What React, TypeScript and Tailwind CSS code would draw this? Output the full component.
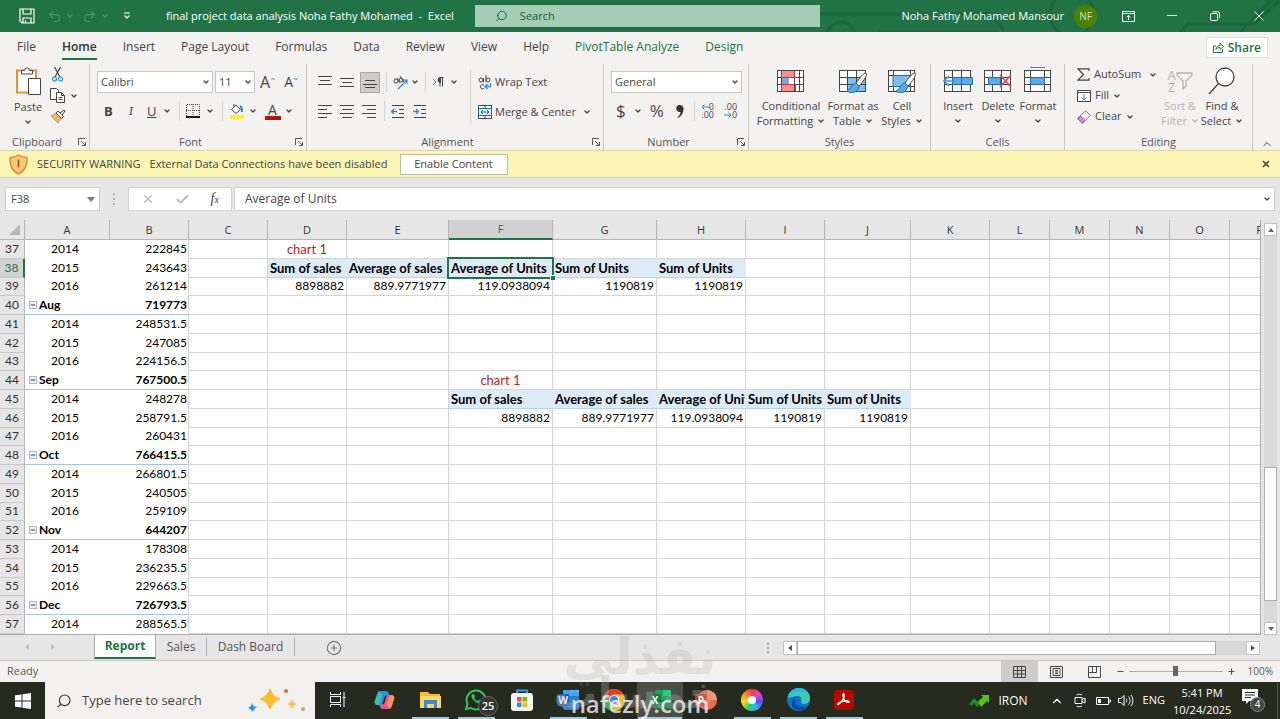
import type { ReactNode } from 'react';
import { ChevronDown, ChevronUp, Minus, Plus, X, Check, Search, Undo2, Redo2, CirclePlus } from 'lucide-react';

type Cell = { text: string; kind?: 'num' | 'head' | 'red' };

const columns = [
    { name: 'A', width: 'w-[85px]' },
    { name: 'B', width: 'w-[79px]' },
    { name: 'C', width: 'w-[79px]' },
    { name: 'D', width: 'w-[79px]' },
    { name: 'E', width: 'w-[102px]' },
    { name: 'F', width: 'w-[104px]' },
    { name: 'G', width: 'w-[104px]' },
    { name: 'H', width: 'w-[89px]' },
    { name: 'I', width: 'w-[79px]' },
    { name: 'J', width: 'w-[86px]' },
    { name: 'K', width: 'w-[79px]' },
    { name: 'L', width: 'w-[60px]' },
    { name: 'M', width: 'w-[60px]' },
    { name: 'N', width: 'w-[60px]' },
    { name: 'O', width: 'w-[60px]' },
    { name: 'P', width: 'w-[60px]' },
];

const pivot: [string, string][] = [
    ['2014', '222845'],
    ['2015', '243643'],
    ['2016', '261214'],
    ['Aug', '719773'],
    ['2014', '248531.5'],
    ['2015', '247085'],
    ['2016', '224156.5'],
    ['Sep', '767500.5'],
    ['2014', '248278'],
    ['2015', '258791.5'],
    ['2016', '260431'],
    ['Oct', '766415.5'],
    ['2014', '266801.5'],
    ['2015', '240505'],
    ['2016', '259109'],
    ['Nov', '644207'],
    ['2014', '178308'],
    ['2015', '236235.5'],
    ['2016', '229663.5'],
    ['Dec', '726793.5'],
    ['2014', '288565.5'],
];

const cells: Record<string, Cell> = {
    D37: { text: 'chart 1', kind: 'red' },
    D38: { text: 'Sum of sales', kind: 'head' },
    E38: { text: 'Average of sales', kind: 'head' },
    F38: { text: 'Average of Units', kind: 'head' },
    G38: { text: 'Sum of Units', kind: 'head' },
    H38: { text: 'Sum of Units', kind: 'head' },
    D39: { text: '8898882', kind: 'num' },
    E39: { text: '889.9771977', kind: 'num' },
    F39: { text: '119.0938094', kind: 'num' },
    G39: { text: '1190819', kind: 'num' },
    H39: { text: '1190819', kind: 'num' },
    F44: { text: 'chart 1', kind: 'red' },
    F45: { text: 'Sum of sales', kind: 'head' },
    G45: { text: 'Average of sales', kind: 'head' },
    H45: { text: 'Average of Units', kind: 'head' },
    I45: { text: 'Sum of Units', kind: 'head' },
    J45: { text: 'Sum of Units', kind: 'head' },
    F46: { text: '8898882', kind: 'num' },
    G46: { text: '889.9771977', kind: 'num' },
    H46: { text: '119.0938094', kind: 'num' },
    I46: { text: '1190819', kind: 'num' },
    J46: { text: '1190819', kind: 'num' },
};

const cellStyles = {
    num: 'text-right border-[#d4d4d4]',
    head: 'font-bold text-[13px] bg-[#ddebf7] border-b-[#b4d3ec] border-r-[#ddebf7]',
    red: 'text-center text-[13px] text-[#c0202a] border-[#d4d4d4]',
};

const Down = ({ className = '' }: { className?: string }) => (
    <ChevronDown className={`w-2 h-2 shrink-0 ${className}`} strokeWidth={4} />
);

/* ---------- title bar ---------- */

const TitleBar = () => (
    <header className="h-8 shrink-0 bg-[#217346] text-white flex items-center text-[11px] relative">
        <svg className="absolute right-0 top-0 h-8 w-[480px] opacity-30" viewBox="0 0 480 32" fill="none" stroke="#0f4d2b" strokeWidth="3">
            <path d="M20 14h170l14 16M78 32h120M380 32l8-8h66l26-24M440 32l32-32" />
            <circle cx="41" cy="36" r="14" />
            <circle cx="272" cy="14" r="22" />
        </svg>
        <div className="flex items-center flex-1 min-w-0 pl-[19px]">
            <button aria-label="Save">
                <svg width="16" height="16" viewBox="0 0 16 16" fill="none" stroke="white" strokeWidth="1.2">
                    <path d="M1 1h14v14H3l-2-2zM4 1v5h8V1M4 15v-5h8v5M6.5 12.5v2" />
                </svg>
            </button>
            <button aria-label="Undo" className="flex items-center gap-1 ml-3 text-[#4f936e]">
                <Undo2 className="w-[15px] h-[15px]" strokeWidth={1.7} />
                <Down />
            </button>
            <button aria-label="Redo" className="flex items-center gap-1 ml-2 text-[#4f936e]">
                <Redo2 className="w-[15px] h-[15px]" strokeWidth={1.7} />
                <Down />
            </button>
            <button aria-label="Customize Quick Access Toolbar" className="ml-[14px]">
                <svg width="8" height="8" viewBox="0 0 8 8" fill="none" stroke="white" strokeWidth="1.2">
                    <path d="M1 1h6M1.5 3.5 4 6l2.500-2.500" />
                </svg>
            </button>
            <h1 className="ml-[35px] whitespace-pre">final project data analysis Noha Fathy Mohamed  -  Excel</h1>
        </div>
        <label className="flex items-center w-[345px] shrink-0 h-[22px] bg-[#a3ceb5] text-[#1d5a39] px-5">
            <Search className="w-[14px] h-[14px] -scale-x-100" strokeWidth={1.7} />
            <input className="ml-3 w-full bg-transparent outline-none placeholder:text-[#1d5a39]" placeholder="Search" aria-label="Search" />
        </label>
        <div className="flex items-center justify-end w-[460px] shrink-0 pr-4 relative">
            <span>Noha Fathy Mohamed Mansour</span>
            <span className="ml-[10px] w-[23px] h-[23px] rounded-full bg-[#498205] text-[10px] flex items-center justify-center text-[#d7e6b8]">NF</span>
            <button aria-label="Ribbon display options" className="ml-[25px]">
                <svg width="13" height="11" viewBox="0 0 13 11" fill="none" stroke="white">
                    <path d="M.5.5h12v10H.5zM.5 2.500h12M6.500 9V4.500M4.500 6.300l2-2 2 2" />
                </svg>
            </button>
            <button aria-label="Minimize" className="ml-8">
                <svg width="10" height="10" viewBox="0 0 10 10" stroke="white"><path d="M0 4.500h10" /></svg>
            </button>
            <button aria-label="Restore" className="ml-[33px]">
                <svg width="10" height="10" viewBox="0 0 10 10" fill="none" stroke="white">
                    <rect x=".5" y="2.500" width="7" height="7" rx="1" />
                    <path d="M2.500.8h5.500a1.500 1.500 0 0 1 1.500 1.500v5" />
                </svg>
            </button>
            <button aria-label="Close" className="ml-[34px]">
                <svg width="10" height="10" viewBox="0 0 10 10" stroke="white"><path d="M.5.5l9 9M9.500.5l-9 9" /></svg>
            </button>
        </div>
    </header>
);

/* ---------- ribbon tabs ---------- */

const tabs = ['File', 'Home', 'Insert', 'Page Layout', 'Formulas', 'Data', 'Review', 'View', 'Help', 'PivotTable Analyze', 'Design'];

const RibbonTabs = () => (
    <nav className="h-[31px] shrink-0 flex items-center pl-[17px] pr-3 text-[12px] text-[#444]">
        <div className="flex flex-1 gap-[26px]">
            {tabs.map(tab => (
                <button
                    key={tab}
                    className={`whitespace-nowrap h-6 border-b-2 ${tab === 'Home' ? 'border-[#217346] font-semibold text-[#333]' : 'border-transparent'} ${tab === 'Design' || tab.startsWith('Pivot') ? 'text-[#217346]' : ''}`}
                >
                    {tab}
                </button>
            ))}
        </div>
        <button className="flex items-center gap-1 bg-white border border-[#e1dfdd] h-[21px] px-[6px] text-[#217346] font-semibold text-[12px]">
            <svg width="11" height="11" viewBox="0 0 11 11" fill="none" stroke="#217346">
                <path d="M3 4H.5v6.500h9V7M3 7.500c0-3 2-4 4-4V1l3.500 3.500L7 7.500V5.500C5 5.500 4 6 3 7.500z" />
            </svg>
            Share
        </button>
    </nav>
);

/* ---------- ribbon ---------- */

const Group = ({ label, width, launcher, children }: { label: string; width: string; launcher?: boolean; children: ReactNode }) => (
    <section className={`${width} shrink-0 flex flex-col border-r border-[#c6c6c6] mt-px`}>
        <div className="flex-1">{children}</div>
        <div className="h-4 flex items-center text-[#555]">
            <span className={`flex-1 text-center ${launcher ? 'pr-1' : ''}`}>{label}</span>
            {launcher && (
                <button aria-label={`${label} settings`} className="mr-[3px]">
                    <svg width="8" height="8" viewBox="0 0 8 8" fill="none" stroke="#555">
                        <path d="M.5 7V.5H7M3 3l4 4M7.500 4v3.500H4" />
                    </svg>
                </button>
            )}
        </div>
    </section>
);

const Lines = ({ kind }: { kind: 'top' | 'middle' | 'bottom' | 'left' | 'center' | 'right' }) => {
    const paths = {
        top: 'M0 1.500h14M2 5.500h10M0 9.500h14',
        middle: 'M0 3.500h14M2 7.500h10M0 11.500h14',
        bottom: 'M2 5.500h10M0 9.500h14M2 12.500h10',
        left: 'M0 1.500h14M0 5.500h9M0 9.500h14M0 13.500h9',
        center: 'M0 1.500h14M2 5.500h10M0 9.500h14M2 13.500h10',
        right: 'M0 1.500h14M5 5.500h9M0 9.500h14M5 13.500h9',
    };
    return (
        <svg width="14" height="15" viewBox="0 0 14 15" stroke="#444">
            <path d={paths[kind]} />
        </svg>
    );
};

const Indent = ({ right }: { right?: boolean }) => (
    <svg width="14" height="13" viewBox="0 0 14 13" fill="none" stroke="#444">
        <path d="M1 .5h12M8 4.500h5M8 8.500h5M1 12.500h12" />
        <path d={right ? 'M0 6.500h5M3 4l2.500 2.500L3 9' : 'M6 6.500H1M3 4 .5 6.500 3 9'} stroke="#2b88d8" strokeWidth="1.3" />
    </svg>
);

const Rule = () => <span className="w-px h-5 bg-[#d8d6d4]" />;

const Brush = () => (
    <>
        <path d="M28 6c-2-1-7 6-10 10l3 3c4-4 9-11 7-13z" fill="#fff" stroke="#444" />
        <path d="M18 16c-4 0-4 5-9 8 4 3 11 2 12-5z" fill="#5ea9e6" stroke="#1e6fb8" />
    </>
);

const GridIcon = ({ kind }: { kind: 'conditional' | 'table' | 'styles' | 'insert' | 'delete' | 'format' }) => (
    <svg width="30" height="28" viewBox="0 0 30 28" fill="none" stroke="#444">
        <rect x="1.500" y="3.500" width="26" height="21" fill="#fff" />
        {kind === 'conditional' && (
            <>
                <path d="M5 4h13v7H5zM5 17h15v7H5z" fill="#f88f8f" stroke="none" />
                <path d="M5 11h8v6H5z" fill="#7aa7e8" stroke="none" />
                <path d="M5.500 3.500v21M18.500 3.500v21M23.500 3.500v21M1.500 10.500h26M1.500 17.500h26" />
                <path d="M5.500 4v6.500h13V4M5.500 24v-6.500h14V24" stroke="#d13438" />
            </>
        )}
        {kind === 'table' && (
            <>
                <path d="M10 11h17v13H10z" fill="#83bdf0" stroke="none" />
                <path d="M9.500 3.500v21M18.500 3.500v21M1.500 10.500h26M1.500 17.500h26" />
                <Brush />
            </>
        )}
        {kind === 'styles' && (
            <>
                <path d="M6.500 3.500v21M23.500 3.500v21M1.500 8.500h26M1.500 19.500h26" />
                <path d="M6 8.500h17v11H6z" fill="#83bdf0" stroke="#1e6fb8" />
                <Brush />
            </>
        )}
        {kind === 'insert' && (
            <>
                <path d="M9.500 3.500v21M18.500 3.500v21M1.500 10.500h26M1.500 17.500h26" />
                <path d="M9.500 10.500h20v7h-20z" fill="#5ea9e6" stroke="#1e6fb8" />
                <path d="M18.500 10.500v7" stroke="#1e6fb8" />
                <path d="M12 14H1M6 9l-5 5 5 5" stroke="#3a96dd" strokeWidth="1.600" />
            </>
        )}
        {kind === 'delete' && (
            <>
                <path d="M9.500 3.500v21M18.500 3.500v21M1.500 10.500h26M1.500 17.500h26" />
                <path d="M5.500 10.500h12v7h-12z" fill="#5ea9e6" stroke="#1e6fb8" />
                <path d="M17 8l11 12M28 8 17 20" stroke="#e0434b" strokeWidth="1.600" />
            </>
        )}
        {kind === 'format' && (
            <>
                <path d="M7.500 3.500v21M21.500 3.500v21M1.500 10.500h26M1.500 17.500h26" />
                <path d="M7.500 10.500h14v7h-14z" fill="#5ea9e6" stroke="#1e6fb8" />
                <path d="M7 .5h15" stroke="#1e8fd8" />
            </>
        )}
    </svg>
);

const BigButton = ({ icon, lines, width, disabled }: { icon: ReactNode; lines: [string, string?]; width: string; disabled?: boolean }) => (
    <button className={`${width} flex flex-col items-center leading-[15px] shrink-0 whitespace-nowrap ${disabled ? 'text-[#b5b3b1]' : 'text-[#444]'}`} disabled={disabled}>
        <span className="h-[34px] flex items-center">{icon}</span>
        <span>{lines[0]}</span>
        <span className="h-[15px] flex items-center gap-1">
            {lines[1]}
            <Down />
        </span>
    </button>
);

const Picker = ({ label, value, width }: { label: string; value: string; width: string }) => (
    <label className={`${width} relative h-[22px] bg-white border border-[#c8c6c4] flex items-center`}>
        <select aria-label={label} className="appearance-none w-full h-full pl-[3px] text-[11px] bg-transparent outline-none">
            <option>{value}</option>
        </select>
        <Down className="absolute right-[2px] pointer-events-none" />
    </label>
);

const Ribbon = () => (
    <div className="shrink-0 h-[87px] flex text-[11px] text-[#444]">
        <Group label="Clipboard" width="w-[90px]" launcher>
            <div className="flex pl-[14px] pt-[3px] gap-2">
                <button className="flex flex-col items-center text-[11px] leading-[14px]">
                    <svg width="26" height="29" viewBox="0 0 26 29" fill="none" stroke="#444">
                        <path d="M2 3.500h19v22H2z" fill="#fff" stroke="#e8912d" strokeWidth="2" />
                        <path d="M6.500 7V3.500h3a2.500 2.500 0 0 1 5 0h3V7z" fill="#fff" />
                        <path d="M13.500 11.500h12v16h-12z" fill="#fff" />
                    </svg>
                    <span className="pt-1">Paste</span>
                    <Down className="mt-1" />
                </button>
                <div className="flex flex-col gap-[6px]">
                    <button aria-label="Cut" className="pl-[2px]">
                        <svg width="11" height="15" viewBox="0 0 11 15" fill="none" stroke="#444" strokeWidth="1.200">
                            <path d="M2.500 0 8 10M8.500 0 3 10" />
                            <circle cx="2.500" cy="12" r="2" stroke="#2b88d8" />
                            <circle cx="8.500" cy="12" r="2" stroke="#2b88d8" />
                        </svg>
                    </button>
                    <button aria-label="Copy" className="flex items-center gap-1">
                        <svg width="16" height="15" viewBox="0 0 16 15" fill="#fff" stroke="#444">
                            <path d="M.5.5h6l2 2v9h-8z" />
                            <path d="M6.500 4.500h5l3 3v7h-8zM11.500 4.500v3h3M8.500 9.500h4M8.500 11.500h4" />
                        </svg>
                        <Down />
                    </button>
                    <button aria-label="Format Painter">
                        <svg width="16" height="15" viewBox="0 0 16 15" fill="none" stroke="#444">
                            <path d="M1 7l5-3 5 5-3 5z" fill="#f4b56a" stroke="#e8912d" />
                            <path d="M6 4l2-2 5.500 5.500-2 2zM10 4l4-3 1 1-3 4z" fill="#fff" />
                        </svg>
                    </button>
                </div>
            </div>
        </Group>

        <Group label="Font" width="w-[217px]" launcher>
            <div className="flex items-center pl-[7px] pt-[7px] gap-[2px]">
                <Picker label="Font" value="Calibri" width="w-[116px]" />
                <Picker label="Font size" value="11" width="w-[40px]" />
                <button aria-label="Increase font size" className="flex items-start text-[16px] leading-5 ml-[3px]">
                    A<ChevronUp className="w-[6px] h-[6px] mt-1 text-[#2b88d8]" strokeWidth={4} />
                </button>
                <button aria-label="Decrease font size" className="flex items-start text-[14px] leading-5 ml-[6px]">
                    A<ChevronDown className="w-[6px] h-[6px] mt-1 text-[#2b88d8]" strokeWidth={4} />
                </button>
            </div>
            <div className="flex items-center pl-[14px] pt-2 text-[13px] leading-5">
                <button aria-label="Bold" className="font-bold">B</button>
                <button aria-label="Italic" className="ml-4 italic font-serif">I</button>
                <button aria-label="Underline" className="ml-[14px] underline">U</button>
                <Down className="ml-[6px] mr-2" />
                <Rule />
                <button aria-label="Borders" className="ml-[6px] flex items-center gap-[6px]">
                    <svg width="14" height="14" viewBox="0 0 14 14" fill="none" stroke="#444">
                        <path d="M.5 12V.5h13V12M7 0v12M0 6.500h14" strokeDasharray="1 1" />
                        <path d="M0 13h14" stroke="#111" strokeWidth="2" />
                    </svg>
                    <Down />
                </button>
                <span className="w-2" />
                <Rule />
                <button aria-label="Fill color" className="ml-[6px] flex items-center gap-1">
                    <svg width="16" height="16" viewBox="0 0 16 16" fill="none" stroke="#444">
                        <path d="M2.500 6.500 7 2l4.500 4.500L7 10.500zM5 4V1" fill="#fff" />
                        <path d="M11 3c2 1 2 3 2 6" stroke="#2b88d8" strokeWidth="2" />
                        <path d="M1 12h14v4H1z" fill="#f8f032" stroke="none" />
                    </svg>
                    <Down />
                </button>
                <button aria-label="Font color" className="ml-2 flex items-center gap-1">
                    <span className="w-4 h-[17px] border-b-4 border-[#c00f0f] text-[14px] leading-[13px]">A</span>
                    <Down />
                </button>
            </div>
        </Group>

        <Group label="Alignment" width="w-[297px]" launcher>
            <div className="flex">
                <div className="w-[163px] pl-[11px] pt-[7px]">
                    <div className="flex items-center h-[22px] gap-2">
                        <button aria-label="Top align"><Lines kind="top" /></button>
                        <button aria-label="Middle align"><Lines kind="middle" /></button>
                        <button aria-label="Bottom align" className="w-5 h-[21px] bg-[#cfcdcb] border border-[#a8a6a4] flex items-center justify-center -mx-[2px]"><Lines kind="bottom" /></button>
                        <span className="flex items-center gap-[6px]">
                            <Rule />
                            <button aria-label="Orientation" className="flex items-center gap-[2px]">
                                <svg width="16" height="15" viewBox="0 0 16 15" fill="none" stroke="#444">
                                    <circle cx="3" cy="6" r="2" />
                                    <path d="M4 3l3 5M7 1l4 6" />
                                    <circle cx="8" cy="5" r="2" />
                                    <path d="M5 14 14 5M10 5h4v4" stroke="#2b88d8" strokeWidth="1.200" />
                                </svg>
                                <Down />
                            </button>
                            <Rule />
                            <button aria-label="Text direction" className="flex items-center gap-[6px]">
                                <svg width="12" height="10" viewBox="0 0 12 10" fill="none" stroke="#444">
                                    <path d="M1 2l3 3-3 3" stroke="#2b88d8" />
                                    <path d="M11.500 .5H8v9M10.500 .5v9" />
                                    <path d="M8.500.5a2 2 0 0 0 0 5z" fill="#444" />
                                </svg>
                                <Down />
                            </button>
                        </span>
                    </div>
                    <div className="flex items-center h-[22px] gap-2 mt-[7px]">
                        <button aria-label="Align left"><Lines kind="left" /></button>
                        <button aria-label="Center"><Lines kind="center" /></button>
                        <button aria-label="Align right"><Lines kind="right" /></button>
                        <span className="flex items-center gap-[6px]">
                            <Rule />
                            <button aria-label="Decrease indent"><Indent /></button>
                        </span>
                        <button aria-label="Increase indent"><Indent right /></button>
                    </div>
                </div>
                <div className="border-l border-[#d8d6d4] pl-[7px] mt-[6px] h-[54px] flex flex-col justify-between">
                    <button className="flex items-center gap-[3px] h-6">
                        <svg width="14" height="15" viewBox="0 0 14 15" fill="none" stroke="#444">
                            <circle cx="3" cy="5" r="2" />
                            <path d="M5.500 3v4.500M8 0v7M6 10a2.200 2.200 0 1 0 0 3.500" />
                            <circle cx="10" cy="5" r="2" />
                            <path d="M12.500 8v3.500H7.500M9.500 9l-2.500 2.500 2.500 2.500" stroke="#2b88d8" strokeWidth="1.300" />
                        </svg>
                        Wrap Text
                    </button>
                    <button className="flex items-center gap-[3px] h-6">
                        <svg width="14" height="14" viewBox="0 0 14 14" fill="#fff" stroke="#444">
                            <path d="M.5.5h13v13H.5zM7 .5v13" />
                            <path d="M.5 3.500h13v7H.5z" stroke="#1e6fb8" fill="#dff0fc" />
                            <path d="M3 7h8M5 5 3 7l2 2M9 5l2 2-2 2" stroke="#1e6fb8" fill="none" />
                        </svg>
                        Merge &amp; Center
                        <Down className="ml-1" />
                    </button>
                </div>
            </div>
        </Group>

        <Group label="Number" width="w-[145px]" launcher>
            <div className="pl-[7px] pt-[7px]">
                <Picker label="Number format" value="General" width="w-[131px]" />
                <div className="flex items-center mt-[7px] h-[22px] pl-[5px] text-[17px]">
                    <button aria-label="Accounting format" className="flex items-center gap-2">$<Down /></button>
                    <button aria-label="Percent style" className="ml-2">%</button>
                    <button aria-label="Comma style" className="ml-3">
                        <svg width="8" height="13" viewBox="0 0 8 13" fill="#333"><path d="M4 0a3.500 3.500 0 0 0-1 6.900c1 .2 1.500 0 1.500 0C4.500 9 3 11 1.500 12L2 13c3-1.500 5.500-5 5.500-9A3.600 3.600 0 0 0 4 0z" /></svg>
                    </button>
                    <span className="w-[10px]" />
                    <Rule />
                    <button aria-label="Increase decimal" className="ml-[6px] flex flex-col items-end text-[9px] leading-[8px]">
                        <span className="flex items-center">
                            <svg width="8" height="6" viewBox="0 0 8 6" fill="none" stroke="#2b88d8"><path d="M8 3H1M3.500.5 1 3l2.500 2.500" /></svg>0
                        </span>
                        <span>.00</span>
                    </button>
                    <button aria-label="Decrease decimal" className="ml-[10px] flex flex-col items-end text-[9px] leading-[8px]">
                        <span>.00</span>
                        <span className="flex items-center">
                            <svg width="8" height="6" viewBox="0 0 8 6" fill="none" stroke="#2b88d8"><path d="M0 3h7M4.500.5 7 3 4.500 5.500" /></svg>0
                        </span>
                    </button>
                </div>
            </div>
        </Group>

        <Group label="Styles" width="w-[182px]">
            <div className="flex pl-[8px]">
                <BigButton width="w-[68px]" icon={<GridIcon kind="conditional" />} lines={['Conditional', 'Formatting']} />
                <BigButton width="w-[56px]" icon={<GridIcon kind="table" />} lines={['Format as', 'Table']} />
                <BigButton width="w-[42px]" icon={<GridIcon kind="styles" />} lines={['Cell', 'Styles']} />
            </div>
        </Group>

        <Group label="Cells" width="w-[134px]">
            <div className="flex pl-[7px]">
                <BigButton width="w-[40px]" icon={<GridIcon kind="insert" />} lines={['Insert']} />
                <BigButton width="w-[40px]" icon={<GridIcon kind="delete" />} lines={['Delete']} />
                <BigButton width="w-[40px]" icon={<GridIcon kind="format" />} lines={['Format']} />
            </div>
        </Group>

        <Group label="Editing" width="w-[188px]">
            <div className="flex pl-[12px]">
                <div className="w-[82px] flex flex-col text-[11px]">
                    <button className="flex items-center gap-1 h-[21px]">
                        <svg width="13" height="13" viewBox="0 0 13 13" fill="none" stroke="#444" strokeWidth="1.200">
                            <path d="M12 3V.8H1L6.500 6.500 1 12.200h11V10" />
                        </svg>
                        AutoSum
                        <Down className="ml-1" />
                    </button>
                    <button className="flex items-center gap-1 h-[21px]">
                        <svg width="14" height="12" viewBox="0 0 14 12" fill="#fff" stroke="#444">
                            <path d="M.5.5h13v11H.5zM.5 2.500h13" />
                            <path d="M7 4v6M4.500 7.500 7 10l2.500-2.500" stroke="#2b88d8" fill="none" />
                        </svg>
                        Fill
                        <Down />
                    </button>
                    <button className="flex items-center gap-1 h-[21px]">
                        <svg width="14" height="14" viewBox="0 0 14 14" fill="#fff" stroke="#a43fb5">
                            <path d="M.8 8.500 8.500.8l4.700 4.700-7.700 7.700z" />
                            <path d="M.8 8.500 3.500 6l4.500 4.500-2.500 2.700z" fill="#d48be0" />
                        </svg>
                        Clear
                        <Down />
                    </button>
                </div>
                <BigButton
                    width="w-[42px]"
                    disabled
                    icon={
                        <span className="flex items-center">
                            <span className="flex flex-col text-[13px] leading-[12px]"><span>A</span><span>Z</span></span>
                            <svg width="17" height="18" viewBox="0 0 17 18" fill="none" stroke="currentColor" strokeWidth="1.300"><path d="M1 1h15v2l-6 6v5l-3 3V9L1 3z" /></svg>
                        </span>
                    }
                    lines={['Sort &', 'Filter']}
                />
                <BigButton
                    width="w-[42px]"
                    icon={<svg width="28" height="28" viewBox="0 0 28 28" fill="#fff" stroke="#444" strokeWidth="1.300"><circle cx="17" cy="10" r="9" /><path d="M10.500 16.500 1 27" /></svg>}
                    lines={['Find &', 'Select']}
                />
            </div>
        </Group>
        <div className="flex-1 flex items-end justify-center">
            <button aria-label="Collapse ribbon"><ChevronUp className="w-3 h-3" /></button>
        </div>
    </div>
);

const SecurityBar = () => (
    <div role="alert" className="shrink-0 h-7 bg-[#fbf6b3] border-y border-[#d9d5b0] flex items-center pl-[9px] pr-[9px] text-[11px] text-[#444]">
        <svg width="19" height="21" viewBox="0 0 19 21" fill="#fbc97a" stroke="#dc8d2b" strokeWidth="1.500">
            <path d="M9.500 1c3 2 5.500 2.500 8.500 2.500 0 8-1.500 13-8.500 16.500C2.500 16.500 1 11.500 1 3.500 4 3.500 6.500 3 9.500 1z" />
            <path d="M9.500 5.500v8" stroke="#8a5a1c" />
        </svg>
        <span className="ml-[9px]">SECURITY WARNING</span>
        <span className="ml-[9px]">External Data Connections have been disabled</span>
        <button className="ml-3 w-[108px] h-[21px] bg-white border border-[#bdbba0]">Enable Content</button>
        <button aria-label="Dismiss" className="ml-auto"><X className="w-[10px] h-[10px]" strokeWidth={4} /></button>
    </div>
);

const FormulaBar = () => (
    <div className="shrink-0 h-[42px] flex items-center pl-[5px] pr-[5px] text-[#444]">
        <label className="w-[95px] h-6 bg-white border border-[#d2d0ce] flex items-center">
            <input aria-label="Name box" defaultValue="F38" className="w-full pl-[5px] text-[11px] outline-none bg-transparent" />
            <svg className="mr-1 shrink-0" width="8" height="5" viewBox="0 0 8 5" fill="#777"><path d="M0 0h8L4 5z" /></svg>
        </label>
        <svg className="ml-[13px]" width="2" height="12" viewBox="0 0 2 12" fill="#b0b0b0"><path d="M0 0h2v2H0zM0 5h2v2H0zM0 10h2v2H0z" /></svg>
        <div className="ml-[13px] w-[104px] h-6 bg-white border border-[#d2d0ce] flex items-center justify-around px-[2px]">
            <button aria-label="Cancel"><X className="w-[14px] h-[14px] text-[#bbb]" /></button>
            <button aria-label="Enter"><Check className="w-[15px] h-[15px] text-[#bbb]" strokeWidth={3} /></button>
            <button aria-label="Insert function" className="font-['Liberation_Serif',serif] italic text-[14px] leading-4">f<span className="text-[10px]">x</span></button>
        </div>
        <label className="ml-[2px] flex-1 h-6 bg-white border border-[#d2d0ce] flex items-center">
            <input aria-label="Formula bar" defaultValue="Average of Units" className="flex-1 pl-[10px] text-[12px] outline-none bg-transparent" />
            <Down className="mr-[3px]" />
        </label>
    </div>
);

/* ---------- sheet ---------- */

const Sheet = () => (
    <div className="flex-1 min-h-0 flex">
        <div className="flex-1 min-w-0 overflow-hidden border-r border-b border-[#ababab]">
            <table className="table-fixed w-[1290px] h-full border-separate border-spacing-0 font-[Lato,sans-serif] text-[12px] leading-4 text-black">
                <colgroup>
                    <col className="w-[25px]" />
                    {columns.map(col => <col key={col.name} className={col.width} />)}
                </colgroup>
                <thead className="font-['Open_Sans',sans-serif] text-[11px]">
                    <tr className="h-5">
                        <th aria-label="Select all" className="p-0 bg-[#e6e6e6] border-r border-b border-[#b5b5b5]">
                            <svg className="ml-auto mr-1" width="11" height="11" viewBox="0 0 11 11" fill="#b5b5b5"><path d="M11 0v11H0z" /></svg>
                        </th>
                        {columns.map(col => (
                            <th
                                key={col.name}
                                scope="col"
                                className={`p-0 font-normal border-r ${col.name === 'F' ? 'bg-[#d2d2d2] text-[#217346] border-b-2 border-b-[#217346] border-r-[#b5b5b5]' : 'bg-[#e6e6e6] text-[#333] border-b border-[#b5b5b5]'}`}
                            >
                                {col.name}
                            </th>
                        ))}
                    </tr>
                </thead>
                <tbody>
                    {pivot.map(([label, value], i) => {
                        const row = 37 + i;
                        const month = label.length === 3;
                        return (
                            <tr key={row}>
                                <th
                                    scope="row"
                                    className={`p-0 font-normal text-center border-b border-b-[#c8c8c8] ${row === 38 ? 'bg-[#d2d2d2] text-[#217346] border-r-2 border-r-[#217346]' : 'bg-[#e6e6e6] text-[#333] border-r border-r-[#b5b5b5]'}`}
                                >
                                    {row}
                                </th>
                                <td className={`p-0 bg-white border-b ${month ? 'font-bold border-[#a9c4e6] pl-1' : 'border-transparent pl-[26px]'}`}>
                                    {month ? (
                                        <span className="flex items-center gap-[2px]">
                                            <button aria-label={`Collapse ${label}`} className="w-2 h-2 border border-[#b0b8c4] bg-[#eef1f5] flex items-center justify-center">
                                                <Minus className="w-[6px] h-[6px]" strokeWidth={3} />
                                            </button>
                                            {label}
                                        </span>
                                    ) : label}
                                </td>
                                <td className={`p-0 pr-px bg-white text-right border-b border-r border-r-[#d4d4d4] ${month ? 'font-bold border-b-[#a9c4e6]' : 'border-b-transparent'}`}>{value}</td>
                                {columns.slice(2).map(col => {
                                    const cell = cells[col.name + row];
                                    const active = col.name === 'F' && row === 38;
                                    return (
                                        <td
                                            key={col.name}
                                            className={`p-0 px-[2px] border-r border-b whitespace-nowrap ${active ? 'relative' : 'overflow-hidden'} ${cell?.kind ? cellStyles[cell.kind] : 'border-[#d4d4d4]'} ${cell?.kind === 'head' ? '' : 'bg-white'}`}
                                        >
                                            {cell?.text}
                                            {active && (
                                                <span className="absolute -inset-[2px] border-2 border-[#217346] pointer-events-none">
                                                    <span className="absolute -right-[3px] -bottom-[3px] w-[5px] h-[5px] bg-[#217346] border-t border-l border-white" />
                                                </span>
                                            )}
                                        </td>
                                    );
                                })}
                            </tr>
                        );
                    })}
                </tbody>
            </table>
        </div>
        <div className="w-[19px] shrink-0 flex flex-col items-start pl-[3px] pt-[3px]">
            <button aria-label="Scroll up" className="w-[13px] h-[13px] bg-white border border-[#c0c0c0] flex items-center justify-center">
                <svg width="6" height="4" viewBox="0 0 6 4" fill="#666"><path d="M0 4h6L3 0z" /></svg>
            </button>
            <div className="w-[13px] flex-1 bg-[#d9d9d9] flex flex-col">
                <div className="grow-[232]" />
                <div className="grow-[133] bg-white border border-[#ababab]" />
                <div className="grow-[21]" />
            </div>
            <button aria-label="Scroll down" className="w-[13px] h-[13px] bg-white border border-[#c0c0c0] flex items-center justify-center">
                <svg width="6" height="4" viewBox="0 0 6 4" fill="#666"><path d="M0 0h6L3 4z" /></svg>
            </button>
        </div>
    </div>
);

const SheetTabs = () => (
    <div className="shrink-0 h-[26px] flex items-start border-b border-[#c6c6c6] text-[12px] text-[#555]">
        <div className="w-[94px] h-6 flex items-center pl-[25px] gap-[22px]">
            <button aria-label="Previous sheet"><svg width="4" height="6" viewBox="0 0 4 6" fill="#bbb"><path d="M4 0v6L0 3z" /></svg></button>
            <button aria-label="Next sheet"><svg width="4" height="6" viewBox="0 0 4 6" fill="#bbb"><path d="M0 0v6l4-3z" /></svg></button>
        </div>
        <button className="w-[62px] h-6 bg-white border-b-2 border-[#217346] border-x border-x-[#ababab] font-bold text-[#217346] leading-[22px]">Report</button>
        <button className="w-[51px] h-[18px] mt-[3px] border-r border-[#ababab] leading-[18px]">Sales</button>
        <button className="w-[88px] h-[18px] mt-[3px] border-r border-[#ababab] leading-[18px]">Dash Board</button>
        <button aria-label="New sheet" className="ml-[31px] h-[26px]"><CirclePlus className="w-4 h-4 text-[#777]" strokeWidth={1.7} /></button>
        <div className="ml-auto h-[26px] flex items-center pr-5">
            <svg width="2" height="11" viewBox="0 0 2 11" fill="#b0b0b0"><path d="M0 0h2v2H0zM0 4h2v2H0zM0 8h2v2H0z" /></svg>
            <button aria-label="Scroll left" className="ml-[14px] w-[14px] h-[14px] bg-white border border-[#c0c0c0] flex items-center justify-center">
                <svg width="4" height="6" viewBox="0 0 4 6" fill="#555"><path d="M4 0v6L0 3z" /></svg>
            </button>
            <div className="w-[449px] h-[14px] bg-[#d9d9d9]">
                <div className="w-[419px] h-[14px] bg-white border border-[#ababab]" />
            </div>
            <button aria-label="Scroll right" className="w-[14px] h-[14px] bg-white border border-[#c0c0c0] flex items-center justify-center">
                <svg width="4" height="6" viewBox="0 0 4 6" fill="#555"><path d="M0 0v6l4-3z" /></svg>
            </button>
        </div>
    </div>
);

const StatusBar = () => (
    <footer className="shrink-0 h-[21px] bg-[#f3f2f1] flex items-center pl-[7px] pr-[7px] text-[11px] text-[#555]">
        <span>Ready</span>
        <div className="ml-auto flex items-center h-full">
            <button aria-label="Normal view" className="w-[37px] h-full bg-[#cfcdcb] flex items-center justify-center">
                <svg width="13" height="12" viewBox="0 0 13 12" fill="none" stroke="#444"><path d="M.5.5h12v11H.5zM4.500.5v11M8.500.5v11M.5 4.500h12M.5 8h12" /></svg>
            </button>
            <button aria-label="Page layout view" className="w-[38px] flex justify-center">
                <svg width="13" height="12" viewBox="0 0 13 12" fill="none" stroke="#444"><path d="M.5.5h12v11H.5zM3 2.500h7v7H3zM5 4.500h3M5 6h3M5 7.500h3" /></svg>
            </button>
            <button aria-label="Page break view" className="w-[38px] flex justify-center">
                <svg width="13" height="12" viewBox="0 0 13 12" fill="none" stroke="#444"><path d="M.5.5h12v11H.5zM4.500.5v6M8.500.5v6h-8" /></svg>
            </button>
            <button aria-label="Zoom out" className="ml-[2px]"><Minus className="w-[9px] h-[9px]" strokeWidth={3} /></button>
            <input
                type="range"
                aria-label="Zoom"
                min="10"
                max="190"
                defaultValue="100"
                className="w-[94px] h-3 mx-1 appearance-none bg-transparent [&::-webkit-slider-runnable-track]:h-px [&::-webkit-slider-runnable-track]:bg-[#b0aeac] [&::-webkit-slider-thumb]:appearance-none [&::-webkit-slider-thumb]:w-[5px] [&::-webkit-slider-thumb]:h-[10px] [&::-webkit-slider-thumb]:-mt-[5px] [&::-webkit-slider-thumb]:bg-[#666]"
            />
            <button aria-label="Zoom in"><Plus className="w-[9px] h-[9px]" strokeWidth={3} /></button>
            <span className="ml-3 text-[10px]">100%</span>
        </div>
    </footer>
);

/* ---------- taskbar ---------- */

const TaskItem = ({ label, open, active, children }: { label: string; open?: boolean; active?: boolean; children: ReactNode }) => (
    <button aria-label={label} className={`w-[46px] h-full flex flex-col items-center ${active ? 'bg-[#4c4f44]' : ''}`}>
        <span className="flex-1 flex items-center relative">{children}</span>
        <span className={`h-[2px] ${active ? 'w-[44px]' : 'w-[37px]'} ${open ? 'bg-[#9ccbe8]' : ''}`} />
    </button>
);

const Taskbar = () => (
    <div className="shrink-0 h-[37px] bg-[#272a1e] text-white flex items-stretch text-[11px] relative">
        <button aria-label="Start" className="w-[45px] flex items-center justify-center">
            <svg width="16" height="16" viewBox="0 0 16 16" fill="white"><path d="M0 2.300 6.500 1.400V7.500H0zM7.500 1.200 16 0v7.500H7.500zM0 8.500h6.500v6.100L0 13.700zM7.500 8.500H16V16l-8.500-1.200z" /></svg>
        </button>
        <label className="w-[270px] bg-[#f2f1f0] text-[#333] flex items-center pl-[11px]">
            <Search className="w-4 h-4 -scale-x-100 shrink-0" strokeWidth={1.700} />
            <input aria-label="Windows search" placeholder="Type here to search" className="ml-[10px] flex-1 min-w-0 text-[13px] bg-transparent outline-none placeholder:text-[#444]" />
            <svg className="mr-2 shrink-0" width="60" height="26" viewBox="0 0 60 26">
                <path d="M23 1q3 8 10 10-7 2-10 10-3-8-10-10 7-2 10-10z" fill="#f8bf2a" stroke="#f8bf2a" strokeLinejoin="round" />
                <path d="M45 11q1 4 5 5-4 1-5 5-1-4-5-5 4-1 5-5z" fill="#f3c14a" />
                <path d="M5 15q1 4 5 4-3 1-4 5-2-3-5-4 3-1 4-5z" fill="#2f97d8" />
                <circle cx="39" cy="3" r="2" fill="#d6694a" />
                <circle cx="56" cy="21" r="2" fill="#a8b86a" />
            </svg>
        </label>
        <TaskItem label="Task view">
            <svg width="16" height="15" viewBox="0 0 16 15" fill="none" stroke="white"><path d="M.5 0v2.500h10V0M.5 15v-2.500h10V15M.5 4.500h10v6H.5zM14 0v15M12.500 5.500h3" /></svg>
        </TaskItem>
        <TaskItem label="Copilot">
            <svg width="21" height="20" viewBox="0 0 21 20">
                <path d="M5 1h7c2 0 3 2 3.500 4L11 6 8 15H4c-3 0-4-2-3-5l2-6c.5-2 1-3 2-3z" fill="#2a8fe0" />
                <path d="M1 11l3-8c3-1 5 1 4 4l-3 8c-3 0-5-1-4-4z" fill="#35c5a0" />
                <path d="M16 19H9c-2 0-3-2-3.500-4L10 14l3-9h4c3 0 4 2 3 5l-2 6c-.5 2-1 3-2 3z" fill="#e8558f" />
                <path d="M20 9l-3 8c-3 1-5-1-4-4l3-8c3 0 5 1 4 4z" fill="#f79a55" />
            </svg>
        </TaskItem>
        <TaskItem label="File Explorer" open>
            <svg width="21" height="18" viewBox="0 0 21 18"><path d="M0 1h8l2 2h10v14H0z" fill="#f5b932" /><path d="M0 5h21v12H0z" fill="#fcd667" /><path d="M4 9h13v8h-3v-4H7v4H4z" fill="#3b8bd0" /></svg>
        </TaskItem>
        <TaskItem label="WhatsApp" open>
            <svg width="24" height="23" viewBox="0 0 24 23" fill="none" stroke="#33c463" strokeWidth="2">
                <path d="M2 21l1.500-5A9.500 9.500 0 1 1 7 20z" />
                <path d="M8 6.500c-1 1-1 3 2 6s5 3.500 6.500 2.500l.5-2-2.500-1-1 1c-1.500-.5-3-2-3.500-3.500l1-1-1-2.500z" fill="#33c463" stroke="none" />
            </svg>
            <span className="absolute left-[14px] top-[14px] w-5 h-5 rounded-full bg-[#33362c] border border-[#666] text-[11px] font-semibold flex items-center justify-center">25</span>
        </TaskItem>
        <TaskItem label="Microsoft Store">
            <svg width="22" height="22" viewBox="0 0 22 22"><path d="M6 6V1.500h10V6" fill="none" stroke="#35a5e5" strokeWidth="1.800" /><rect y="4" width="22" height="18" rx="3" fill="#f4f4f4" /><path d="M6 8h4.500v4.500H6z" fill="#e8502a" /><path d="M11.500 8H16v4.500h-4.500z" fill="#7fba00" /><path d="M6 13.500h4.500V18H6z" fill="#1a9ae0" /><path d="M11.500 13.500H16V18h-4.500z" fill="#fdb813" /></svg>
        </TaskItem>
        <TaskItem label="Word" open>
            <svg width="22" height="20" viewBox="0 0 22 20"><rect x="6" width="16" height="20" rx="2" fill="#2b7cd3" /><path d="M6 0h16v6H6z" fill="#41a5ee" /><rect y="4" width="12" height="12" rx="1" fill="#185abd" /><text x="6" y="13.500" textAnchor="middle" fill="white" fontSize="10" fontWeight="700">W</text></svg>
        </TaskItem>
        <TaskItem label="Chrome">
            <svg width="22" height="22" viewBox="0 0 22 22"><circle cx="11" cy="11" r="11" fill="#fbc116" /><path d="M1.500 5.500A11 11 0 0 1 20.500 5.500H11L6.500 13.500z" fill="#e33b2e" /><path d="M1.500 5.500 6.500 13.800 11 16l-1 6A11 11 0 0 1 1.500 5.500z" fill="#2ba24c" /><circle cx="11" cy="11" r="5.200" fill="white" /><circle cx="11" cy="11" r="4" fill="#3f83ee" /></svg>
        </TaskItem>
        <TaskItem label="Excel" open active>
            <svg width="22" height="20" viewBox="0 0 22 20"><rect x="6" width="16" height="20" rx="2" fill="#21a366" /><path d="M6 10h16v10H6z" fill="#107c41" /><path d="M14 0h8v6h-8z" fill="#33c481" /><rect y="4" width="12" height="12" rx="1" fill="#107c41" /><text x="6" y="13.500" textAnchor="middle" fill="white" fontSize="10" fontWeight="700">X</text></svg>
        </TaskItem>
        <TaskItem label="PowerPoint">
            <svg width="22" height="20" viewBox="0 0 22 20"><circle cx="12" cy="10" r="10" fill="#ed6c47" /><path d="M12 0a10 10 0 0 1 10 10H12z" fill="#ff8f6b" /><rect y="4" width="12" height="12" rx="1" fill="#c43e1c" /><text x="6" y="13.500" textAnchor="middle" fill="white" fontSize="10" fontWeight="700">P</text></svg>
        </TaskItem>
        <TaskItem label="Browser" open>
            <span className="w-[22px] h-[22px] rounded-full bg-[conic-gradient(#f43f3f,#e83fd0,#5a4df0,#28b8f0,#35d060,#e8e030,#f89030,#f43f3f)] flex items-center justify-center">
                <span className="w-2 h-2 rounded-full bg-white" />
            </span>
        </TaskItem>
        <TaskItem label="Edge" open>
            <svg width="23" height="23" viewBox="0 0 23 23"><circle cx="11.500" cy="11.500" r="11.500" fill="#1272c8" /><path d="M1 9C3 2 9 0 12 0c7 0 11 5 11 10 0 4-3 6-6 6-2 0-4-1-3-3s0-5-4-5S2 11 1 9z" fill="#3ccbb0" /><path d="M1 8C3 2 8 0 12 0c4 0 8 3 9 6-5-4-16-3-20 2z" fill="#2cb6e8" /><path d="M9 10c-3 5 2 11 11 8-4 6-13 6-15 0-1-4 1-7 4-8z" fill="#0c4f9e" /></svg>
        </TaskItem>
        <TaskItem label="Acrobat" open>
            <svg width="20" height="20" viewBox="0 0 20 20" fill="none"><rect width="20" height="20" rx="4" fill="#b30b00" /><path d="M9.500 4c2 0 0 7-5 10.500-1.500.500-1-1 1-2 3-1.500 7-2 9-1.300 2 1-1 2-3.500-.7C9 8.500 8.500 4 9.500 4z" stroke="white" strokeWidth="1.300" /></svg>
        </TaskItem>
        <div className="ml-auto flex items-center pr-[2px]">
            <svg width="21" height="13" viewBox="0 0 21 13"><path d="M0 10l5-6 4 4 3-4v5l-4 4-3-4-2 3z" fill="#1e8a2a" /><path d="M9 8l5-5-2-2h8v8l-2-2-6 6z" fill="#56c41c" /></svg>
            <span className="ml-2 text-[12px]">IRON</span>
            <ChevronUp className="ml-[22px] w-[14px] h-[14px]" strokeWidth={2} />
            <svg className="ml-[10px]" width="12" height="15" viewBox="0 0 12 15" fill="none" stroke="white"><path d="M1 4.500h7v6H1zM8 6.500l3-1.500v5L8 8.500M2.500 2c1.500-1 4-1 5.500 0M2.500 13c1.500 1 4 1 5.500 0" /></svg>
            <svg className="ml-[10px]" width="15" height="10" viewBox="0 0 15 10" fill="none" stroke="white"><path d="M.5 1.500h12v7H.5zM13 4h1.500v2H13" /><path d="M2 3h3v4H2z" fill="white" stroke="none" /></svg>
            <svg className="ml-[7px]" width="16" height="13" viewBox="0 0 16 13" fill="none" stroke="white"><path d="M.5 4.500h2.500l3-3v10l-3-3H.5zM8 4.500c1 1 1 3 0 4M10.500 2.500c2 2 2 6 0 8M13 1c2.500 3 2.500 8 0 11" /></svg>
            <span className="ml-[9px]">ENG</span>
            <span className="ml-2 w-[58px] text-center text-[11px] leading-[17px]">5:41 PM<br />10/24/2025</span>
            <span className="ml-[11px] w-6 h-6 relative">
                <svg width="16" height="15" viewBox="0 0 16 15"><path d="M0 0h16v12H7l-3 3v-3H0z" fill="white" /><path d="M3 3.500h10M3 6h10M3 8.500h6" stroke="#272a1e" /></svg>
                <span className="absolute left-2 top-2 w-[15px] h-[15px] rounded-full bg-[#45483e] border border-[#888] text-[10px] flex items-center justify-center">4</span>
            </span>
            <span className="ml-[11px] w-px h-9 bg-[#55584c]" />
        </div>
    </div>
);

const Watermark = () => (
    <div aria-hidden="true" className="absolute bottom-0 left-1/2 -translate-x-1/2 w-[160px] h-20 pointer-events-none">
        <p dir="rtl" className="absolute inset-x-0 -top-3 text-center whitespace-nowrap font-['DejaVu_Sans',sans-serif] font-bold text-[50px] leading-[60px] text-[#9a9a9a]/20">نفذلي</p>
        <p dir="rtl" className="absolute inset-x-0 top-6 text-center whitespace-nowrap font-['DejaVu_Sans',sans-serif] font-bold text-[44px] leading-[60px] text-[#b0b0b0]/35">خمسات</p>
        <p className="absolute inset-x-0 bottom-0 text-center font-semibold text-[24px] leading-[30px] text-white/75">nafezly.com</p>
    </div>
);

export default function App() {
    return (
        <div className="h-screen min-w-[1280px] flex flex-col bg-[#e6e6e6] font-['Open_Sans',sans-serif] relative overflow-hidden">
            <TitleBar />
            <div className="shrink-0 bg-[#f3f2f1]">
                <RibbonTabs />
                <Ribbon />
            </div>
            <SecurityBar />
            <FormulaBar />
            <Sheet />
            <SheetTabs />
            <StatusBar />
            <Taskbar />
            <Watermark />
        </div>
    );
}
